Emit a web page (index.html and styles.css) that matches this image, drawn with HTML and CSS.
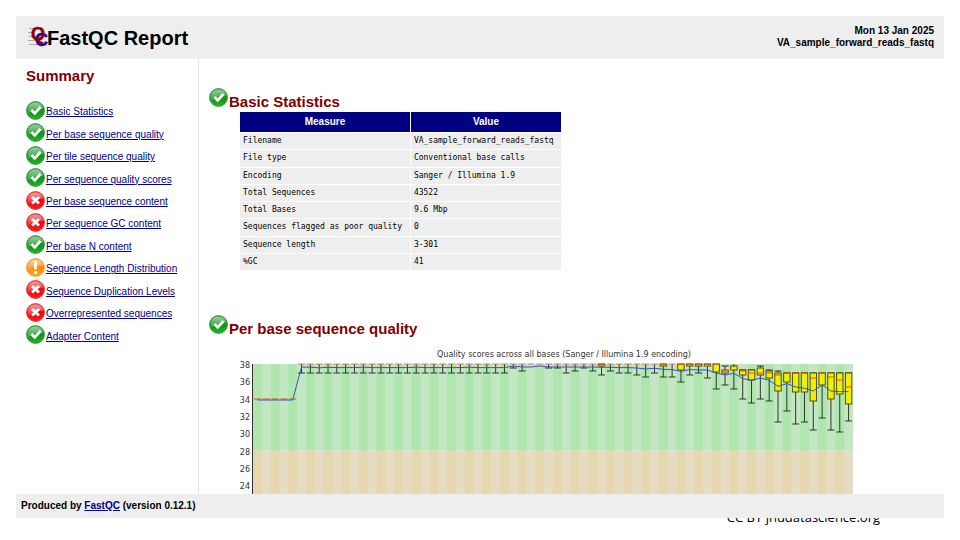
FILE: index.html
```
<!DOCTYPE html>
<html lang="en">
<head>
<meta charset="utf-8">
<title>VA_sample_forward_reads_fastq FastQC Report</title>
<link rel="stylesheet" href="styles.css">
</head>
<body>
<svg class="defs" aria-hidden="true">
  <defs>
    <linearGradient id="gGreen" x1="0" y1="0" x2="0" y2="1"><stop offset="0" stop-color="#2d9440"/><stop offset=".55" stop-color="#12961a"/><stop offset="1" stop-color="#22b41e"/></linearGradient>
    <linearGradient id="gRed" x1="0" y1="0" x2="0" y2="1"><stop offset="0" stop-color="#e83030"/><stop offset=".55" stop-color="#f00810"/><stop offset="1" stop-color="#ff1c1c"/></linearGradient>
    <linearGradient id="gAmber" x1="0" y1="0" x2="0" y2="1"><stop offset="0" stop-color="#f39a28"/><stop offset=".55" stop-color="#fb9006"/><stop offset="1" stop-color="#ffa41c"/></linearGradient>
    <linearGradient id="gloss" x1="0" y1="0" x2="0" y2="1"><stop offset="0" stop-color="#fff" stop-opacity=".5"/><stop offset="1" stop-color="#fff" stop-opacity=".15"/></linearGradient>
    <symbol id="pass" viewBox="0 0 38 38">
      <circle cx="19" cy="19" r="18" fill="url(#gGreen)" stroke="#2f9440" stroke-width="1.6"/>
      <path d="M3 20C3 8 11 3 19 3s15 5 15 12C25 14 14 16 5 25Z" fill="url(#gloss)"/>
      <path d="M9 20l4-4 4.500 4.500 9.500-10.500 4 4-13.500 14.500Z" fill="#fff"/>
    </symbol>
    <symbol id="fail" viewBox="0 0 38 38">
      <circle cx="19" cy="19" r="18" fill="url(#gRed)" stroke="#e23434" stroke-width="1.600"/>
      <path d="M3 20C3 8 11 3 19 3s15 5 15 12C25 14 14 16 5 25Z" fill="url(#gloss)"/>
      <path d="M12 12l14 13m0-13l-14 13" stroke="#fff" stroke-width="6" fill="none"/>
    </symbol>
    <symbol id="warn" viewBox="0 0 38 38">
      <circle cx="19" cy="19" r="18" fill="url(#gAmber)" stroke="#f09a30" stroke-width="1.600"/>
      <path d="M3 20C3 8 11 3 19 3s15 5 15 12C25 14 14 16 5 25Z" fill="url(#gloss)"/>
      <path d="M15.500 6h7l-1 17h-5Z" fill="#fff"/><circle cx="19" cy="29" r="3.500" fill="#fff"/>
    </symbol>
  </defs>
</svg>

<header class="header">
  <h1 class="title">
    <svg class="logo" viewBox="0 0 20 22" role="img" aria-label="FastQC">
      <path d="M1 3.500h5M0 7.500h5M1 11.500h7M0 15.500h8M1 19.500h8" stroke="#aaa" stroke-width="1"/>
      <text class="logo-c" x="7" y="21">C</text>
      <text class="logo-q" x="3" y="15">Q</text>
    </svg>FastQC Report
  </h1>
  <div class="meta">Mon 13 Jan 2025<br>VA_sample_forward_reads_fastq</div>
</header>

<div class="content">
  <nav class="summary">
    <h2>Summary</h2>
    <ul>
      <li><svg class="icon"><use href="#pass"/></svg><a href="#M0">Basic Statistics</a></li>
      <li><svg class="icon"><use href="#pass"/></svg><a href="#M1">Per base sequence quality</a></li>
      <li><svg class="icon"><use href="#pass"/></svg><a href="#M2">Per tile sequence quality</a></li>
      <li><svg class="icon"><use href="#pass"/></svg><a href="#M3">Per sequence quality scores</a></li>
      <li><svg class="icon"><use href="#fail"/></svg><a href="#M4">Per base sequence content</a></li>
      <li><svg class="icon"><use href="#fail"/></svg><a href="#M5">Per sequence GC content</a></li>
      <li><svg class="icon"><use href="#pass"/></svg><a href="#M6">Per base N content</a></li>
      <li><svg class="icon"><use href="#warn"/></svg><a href="#M7">Sequence Length Distribution</a></li>
      <li><svg class="icon"><use href="#fail"/></svg><a href="#M8">Sequence Duplication Levels</a></li>
      <li><svg class="icon"><use href="#fail"/></svg><a href="#M9">Overrepresented sequences</a></li>
      <li><svg class="icon"><use href="#pass"/></svg><a href="#M10">Adapter Content</a></li>
    </ul>
  </nav>

  <main class="modules">
    <section class="module" id="M0">
      <h2><svg class="icon"><use href="#pass"/></svg><span>Basic Statistics</span></h2>
      <table>
        <thead><tr><th>Measure</th><th>Value</th></tr></thead>
        <tbody>
          <tr><td>Filename</td><td>VA_sample_forward_reads_fastq</td></tr>
          <tr><td>File type</td><td>Conventional base calls</td></tr>
          <tr><td>Encoding</td><td>Sanger / Illumina 1.9</td></tr>
          <tr><td>Total Sequences</td><td>43522</td></tr>
          <tr><td>Total Bases</td><td>9.6 Mbp</td></tr>
          <tr><td>Sequences flagged as poor quality</td><td>0</td></tr>
          <tr><td>Sequence length</td><td>3-301</td></tr>
          <tr><td>%GC</td><td>41</td></tr>
        </tbody>
      </table>
    </section>
    <section class="module" id="M1">
      <h2><svg class="icon"><use href="#pass"/></svg><span>Per base sequence quality</span></h2>
      <svg class="chart" id="quality" viewBox="0 0 620 160" role="img" aria-label="Per base quality graph"></svg>
    </section>
  </main>
</div>

<footer class="footer">Produced by <a href="#fastqc">FastQC</a> (version 0.12.1)</footer>
<div class="credit">CC BY jhudatascience.org</div>
<script src="chart.js"></script>
</body>
</html>
```
FILE: styles.css
```
* { box-sizing: border-box; }

body {
  margin: 0;
  padding: 16px 16px 22px;
  height: 100vh;
  display: flex;
  flex-direction: column;
  overflow: hidden;
  background: #fff;
  color: #000;
  font-family: "Liberation Sans", Arial, sans-serif;
  font-size: 10px;
}

h1, h2, ul { margin: 0; padding: 0; }
a { color: #000090; }

.defs { position: absolute; width: 0; height: 0; }
.icon { width: 19px; height: 19px; flex: none; display: block; }

.header {
  display: flex;
  justify-content: space-between;
  flex: none;
  padding: 8px 10px 9px 12px;
  background: #eee;
}

.title { display: flex; align-items: center; font-size: 20px; line-height: 24px; padding-top: 2px; }
.logo { width: 20px; height: 22px; margin: -5px -1px 0 0; overflow: visible; }
.logo text { font-family: "Liberation Sans", Arial, sans-serif; font-weight: bold; stroke-width: 0.5px; }
.logo-q { fill: #900008; stroke: #900008; font-size: 18px; }
.logo-c { fill: #0a0aa0; stroke: #0a0aa0; font-size: 18px; }

.meta { text-align: right; font-weight: bold; line-height: 12px; padding-top: 1px; }

.content { display: flex; flex: 1; min-height: 0; }

.summary { flex: none; width: 183px; padding: 8px 0 0 10px; border-right: 1px solid #e4e4e4; }
.summary h2 { color: #800000; font-size: 15px; line-height: 18px; }
.summary ul {
  display: grid;
  grid-auto-rows: 1fr;
  height: 247px;
  margin-top: 14px;
  list-style: none;
}
.summary li { display: flex; align-items: center; gap: 1px; }
.summary li a { padding-top: 4px; line-height: 12px; }

.modules { flex: 1; min-width: 0; padding: 29px 0 0 10px; overflow: hidden; }
.module { margin-bottom: 44px; }
.module h2 { display: flex; gap: 1px; color: #800000; font-size: 15px; line-height: 18px; }
.module h2 span { padding-top: 5px; }

table {
  margin-left: 30px;
  width: 323px;
  height: 160px;
  border-spacing: 1px;
}
th { padding: 0 3px; height: 20px; background: #000080; color: #fff; font-size: 10px; line-height: 12px; }
td {
  padding: 0 3px;
  background: #eee;
  font-family: "DejaVu Sans Mono", monospace;
  font-size: 8px;
  line-height: 12px;
  white-space: nowrap;
}

.chart { display: block; width: 620px; height: 160px; margin: 13px 0 0 30px; overflow: visible; }
.chart text { font-family: "DejaVu Sans", sans-serif; font-size: 8px; fill: #333; }

.footer {
  position: relative;
  z-index: 1;
  flex: none;
  padding: 5px;
  background: #eee;
  font-weight: bold;
  line-height: 14px;
}

.credit {
  position: absolute;
  right: 80px;
  bottom: 14px;
  font-family: "Open Sans", sans-serif;
  font-size: 13px;
  line-height: 18px;
}
```
FILE: chart.js
```
// Quality score box plot: one box per base group.
const svg = document.getElementById('quality');
const NS = 'http://www.w3.org/2000/svg';
const LEFT = 14, TOP = 13, BAND = 600 / 68, UNIT = 8.67, MAX = 38, MIN = 22;

function add(name, attrs, text) {
  const el = document.createElementNS(NS, name);
  for (const key in attrs) el.setAttribute(key, attrs[key]);
  if (text !== undefined) el.textContent = text;
  svg.appendChild(el);
}
const y = v => TOP + (MAX - v) * UNIT;
const x = i => LEFT + (i + 0.5) * BAND;

// Background zones: a solid light fill with darker stripes on top
const zones = [[38, 28, '#afe6af', '#c3e6c3'], [28, MIN, '#e6d7af', '#e6dcc3']];
for (const [hi, lo, dark, light] of zones) {
  const height = (hi - lo) * UNIT;
  add('rect', { x: LEFT, y: y(hi), width: 600, height, fill: light });
  for (let i = 0; i < 68; i += 2) {
    add('rect', { x: LEFT + i * BAND, y: y(hi), width: BAND, height, fill: dark });
  }
}
add('path', { d: `M${LEFT - 0.5} ${TOP}V${y(MIN)}`, stroke: '#333', 'stroke-width': 1 });
for (let v = MAX; v > MIN; v -= 2) add('text', { x: LEFT - 3, y: y(v) + 4, 'text-anchor': 'end' }, v);
add('text', { x: 325, y: 6, 'text-anchor': 'middle' }, 'Quality scores across all bases (Sanger / Illumina 1.9 encoding)');

// Offsets below the top of the plot: [upper whisker, box top, box bottom, median, lower whisker]
const rows = [];
for (let i = 0; i < 5; i++) rows.push([35, 35, 35, 35, 35]);
for (let i = 5; i < 29; i++) rows.push([0, 0, 0, 0, 9]);
for (const low of [4, 7, 0, 0, 4, 4, 9, 7, 4, 7]) rows.push([0, 0, 0, 0, low]);
rows.push([0, 0, 2, 0, 11]);
for (const low of [7, 9, 9, 11, 13, 9]) rows.push([0, 0, 0, 0, low]);
rows.push(
  [0, 0, 2, 0, 13], [0, 0, 0, 0, 13], [0, 0, 6, 0, 18], [0, 0, 2, 0, 11], [0, 0, 2, 0, 9],
  [0, 0, 2, 0, 14], [0, 0, 8, 0, 25], [2, 6, 9, 7, 21], [0, 2, 6, 2, 25], [6, 6, 11, 7, 35],
  [6, 6, 16, 9, 39], [2, 4, 11, 9, 35], [6, 7, 14, 9, 37], [7, 9, 27, 11, 58], [9, 9, 18, 9, 47],
  [9, 9, 28, 9, 60], [9, 9, 28, 9, 58], [9, 9, 37, 14, 66], [9, 9, 21, 9, 54], [9, 9, 35, 13, 66],
  [9, 9, 30, 16, 68], [9, 9, 40, 23, 57]
);
const ink = { stroke: '#222', 'stroke-width': 1, fill: 'none' };
rows.forEach(([hi, top, bottom, median, low], i) => {
  const c = x(i);
  if (low > hi) {
    add('path', { ...ink, 'stroke-opacity': 0.9, d: `M${c} ${TOP + hi}V${TOP + low}M${c - 3.5} ${TOP + low}h7` });
    if (hi > 0) add('path', { ...ink, d: `M${c - 3.5} ${TOP + hi}h7` });
  }
  if (bottom > top) {
    add('rect', { x: c - 3.2, y: TOP + top, width: 6.4, height: bottom - top, fill: '#f0f000', stroke: '#55550a', 'stroke-width': 1 });
  }
  add('path', { d: `M${c - 3.5} ${TOP + median}h7`, stroke: i < 5 || bottom > top ? '#f04614' : '#e07868', 'stroke-width': 1 });
});

// Mean line
const mean = [36, 36, 36, 36, 36, 3, 3.2, 3.8, 3.3];
while (mean.length < 29) mean.push(mean.length % 6 === 0 ? 3.2 : 3.6);
mean.push(2, 3, 3, 2, 3, 3, 3, 3, 3, 3, 3.3, 3.3, 3.6, 3.6, 4, 5, 4.3, 5.3, 5.6, 7.3, 5.6, 6, 6, 9,
  11, 9.3, 14.6, 16.3, 14, 16.3, 22.3, 19.6, 23, 24.3, 27, 21, 27, 27.6, 27.6);
add('path', {
  d: 'M' + mean.map((m, i) => `${x(i)} ${TOP + m}`).join('L'),
  stroke: '#3c50c8', 'stroke-width': 1, fill: 'none'
});
```
